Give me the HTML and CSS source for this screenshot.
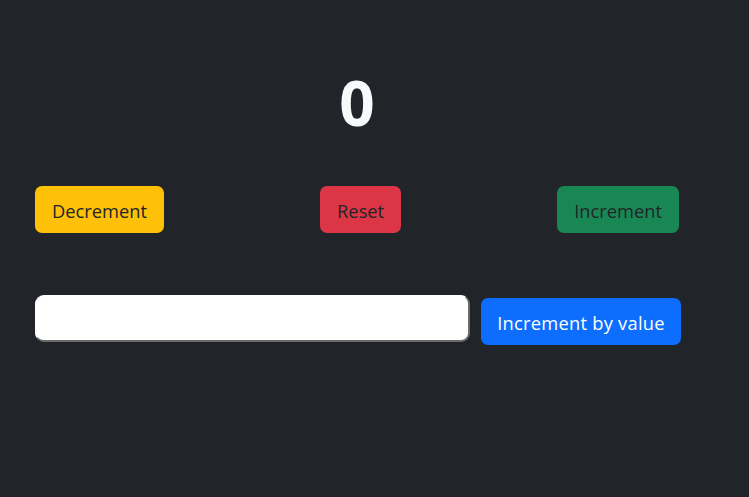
FILE: index.html
```html
<!DOCTYPE html>
<html>
<head>
<meta charset="utf-8">
<link rel="stylesheet" href="styles.css">
</head>
<body>
<div class="app">
  <h1 class="count">0</h1>
  <div class="controls">
    <button class="btn btn-warning">Decrement</button>
    <button class="btn btn-danger">Reset</button>
    <button class="btn btn-success">Increment</button>
  </div>
  <div class="by-value">
    <input class="value-input" type="text">
    <button class="btn btn-primary">Increment by value</button>
  </div>
</div>
</body>
</html>
```

FILE: styles.css
```css
html, body {
  margin: 0;
  padding: 0;
  background: #212529;
  height: 100%;
}
body {
  font-family: "Open Sans", "Noto Sans", sans-serif;
  color: #f8f9fa;
}
.app {
  width: 644px;
  padding: 62px 0 0 35px;
}
.count {
  margin: 0;
  text-align: center;
  font-size: 62px;
  font-weight: 700;
  line-height: 80px;
  height: 80px;
}
.controls {
  display: flex;
  justify-content: space-between;
  margin-top: 44px;
}
.btn {
  font-family: inherit;
  font-size: 18.3px;
  line-height: 25px;
  padding: 11px 16px 9px;
  border: 1px solid transparent;
  border-radius: 7px;
  color: #212529;
  height: 47px;
  white-space: nowrap;
  cursor: pointer;
}
.btn-warning { background: #ffc107; }
.btn-danger { background: #dc3545; }
.btn-success { background: #198754; }
.btn-primary { background: #0d6efd; color: #fff; letter-spacing: 0.25px; }
.by-value {
  display: flex;
  align-items: flex-start;
  gap: 11px;
  margin-top: 62px;
}
.value-input {
  flex: none;
  width: 435px;
  height: 47px;
  box-sizing: border-box;
  margin: 0;
  border-style: solid;
  border-width: 1px 2px 2px 1px;
  border-color: #fff #6b6b6b #6b6b6b #fff;
  border-radius: 9px;
  background: #fff;
  outline: none;
}
.by-value .btn {
  flex: none;
  margin-top: 3px;
  width: 200px;
  padding-left: 0;
  padding-right: 0;
}
```
